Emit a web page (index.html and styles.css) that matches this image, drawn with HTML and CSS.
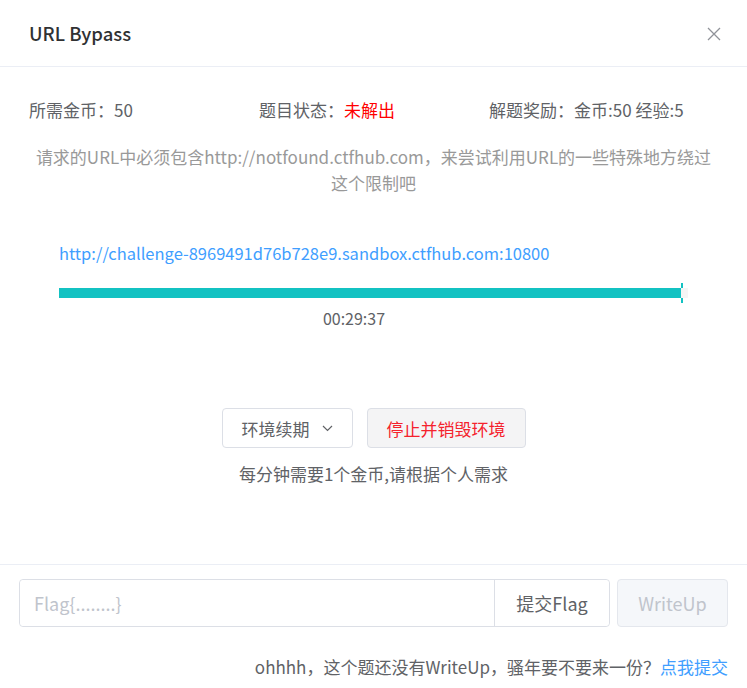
FILE: index.html
```html
<!DOCTYPE html>
<html lang="zh-CN">
<head>
    <meta charset="UTF-8">
    <title>URL Bypass</title>
    <link rel="stylesheet" href="styles.css">
</head>
<body>
    <div class="dialog">
        <div class="dialog-header">
            <span class="dialog-title">URL Bypass</span>
            <button class="close-btn" aria-label="close">
                <svg width="14" height="14" viewBox="0 0 14 14"><path d="M1 1 L13 13 M13 1 L1 13" stroke="#909399" stroke-width="1.3" fill="none"/></svg>
            </button>
        </div>

        <div class="dialog-body">
            <div class="info-row">
                <div>所需金币：50</div>
                <div>题目状态：<span class="unsolved">未解出</span></div>
                <div>解题奖励：金币:50 经验:5</div>
            </div>
            <p class="desc">请求的URL中必须包含http://notfound.ctfhub.com，来尝试利用URL的一些特殊地方绕过<br>这个限制吧</p>

            <div class="env">
                <a class="env-link" href="#">http://challenge-8969491d76b728e9.sandbox.ctfhub.com:10800</a>
                <div class="progress">
                    <div class="progress-fill" style="width: 98.9%"></div>
                    <span class="progress-tick"></span>
                </div>
                <div class="countdown">00:29:37</div>
            </div>

            <div class="actions">
                <button class="btn">环境续期
                    <svg width="11" height="7" viewBox="0 0 11 7"><path d="M1 1 L5.5 5.5 L10 1" stroke="#606266" stroke-width="1.2" fill="none"/></svg>
                </button>
                <button class="btn btn-danger">停止并销毁环境</button>
            </div>
            <div class="note">每分钟需要1个金币,请根据个人需求</div>
        </div>

        <div class="dialog-footer">
            <div class="flag-row">
                <div class="input-group">
                    <input type="text" class="flag-input" placeholder="Flag{........}">
                    <button class="input-append">提交Flag</button>
                </div>
                <button class="btn-writeup" disabled>WriteUp</button>
            </div>
            <div class="writeup-tip">ohhhh，这个题还没有WriteUp，骚年要不要来一份？<a href="#">点我提交</a></div>
        </div>
    </div>
</body>
</html>
```

FILE: styles.css
```css
body {
    margin: 0;
    background: #fff;
    font-family: "Noto Sans CJK SC", "Noto Sans", sans-serif;
    color: #606266;
    font-size: 17px;
}
.dialog {
    width: 747px;
    height: 688px;
    background: #fff;
}
.dialog-header {
    display: flex;
    justify-content: space-between;
    align-items: center;
    height: 66px;
    padding: 0 26px 0 29px;
    border-bottom: 1px solid #ebeef5;
}
.dialog-title {
    font-size: 18.5px;
    font-weight: 500;
    color: #303133;
}
.close-btn {
    background: none;
    border: none;
    padding: 0;
    margin-top: 2px;
    cursor: pointer;
    display: flex;
}
.dialog-body {
    padding: 31px 29px 0;
    height: 466px;
    border-bottom: 1px solid #ebeef5;
}
.info-row {
    display: grid;
    grid-template-columns: 230px 230px 1fr;
    line-height: 24px;
}
.unsolved {
    color: #ff0000;
}
.desc {
    margin: 22px 0 0;
    color: #999;
    line-height: 26px;
    text-align: center;
    white-space: nowrap;
}
.env {
    padding: 45px 30px 0;
}
.env-link {
    display: block;
    color: #409eff;
    text-decoration: none;
    line-height: 24px;
    font-size: 16.5px;
}
.progress {
    position: relative;
    margin-top: 23px;
    height: 10px;
    width: 629px;
    background: #f5f5f5;
}
.progress-fill {
    height: 100%;
    background: #13c2c2;
}
.progress-tick {
    position: absolute;
    top: -5px;
    bottom: -5px;
    left: 622px;
    width: 2px;
    background: linear-gradient(#13c2c2 0 5px, transparent 5px 15px, #13c2c2 15px);
}
.countdown {
    margin-top: 10px;
    width: 590px;
    text-align: center;
    line-height: 20px;
    font-size: 16px;
}
.actions {
    display: flex;
    justify-content: center;
    gap: 14px;
    margin-top: 80px;
}
.btn {
    display: flex;
    align-items: center;
    gap: 12px;
    height: 40px;
    padding: 0 19px;
    border: 1px solid #dcdfe6;
    border-radius: 4px;
    background: #fff;
    color: #606266;
    font-family: inherit;
    font-size: 17px;
}
.btn-danger {
    background: #f4f4f5;
    color: #f5222d;
}
.note {
    margin-top: 14px;
    text-align: center;
    line-height: 24px;
}
.dialog-footer {
    padding: 14px 19px 0;
}
.flag-row {
    display: flex;
    gap: 7px;
}
.input-group {
    display: flex;
    width: 591px;
    height: 48px;
    border: 1px solid #dcdfe6;
    border-radius: 4px;
    box-sizing: border-box;
}
.flag-input {
    flex: 1;
    border: none;
    border-right: 1px solid #dcdfe6;
    border-radius: 4px 0 0 4px;
    padding: 0 14px;
    font-family: inherit;
    font-size: 18px;
    color: #606266;
    outline: none;
}
.flag-input::placeholder {
    color: #c0c4cc;
}
.input-append {
    width: 114px;
    border: none;
    background: #fff;
    border-radius: 0 4px 4px 0;
    color: #606266;
    font-family: inherit;
    font-size: 18px;
}
.btn-writeup {
    width: 111px;
    height: 48px;
    border: 1px solid #e4e7ed;
    border-radius: 4px;
    background: #f5f7fa;
    color: #c0c4cc;
    font-family: inherit;
    font-size: 18px;
}
.writeup-tip {
    margin-top: 28px;
    text-align: right;
    line-height: 24px;
}
.writeup-tip a {
    color: #409eff;
    text-decoration: none;
}
```
